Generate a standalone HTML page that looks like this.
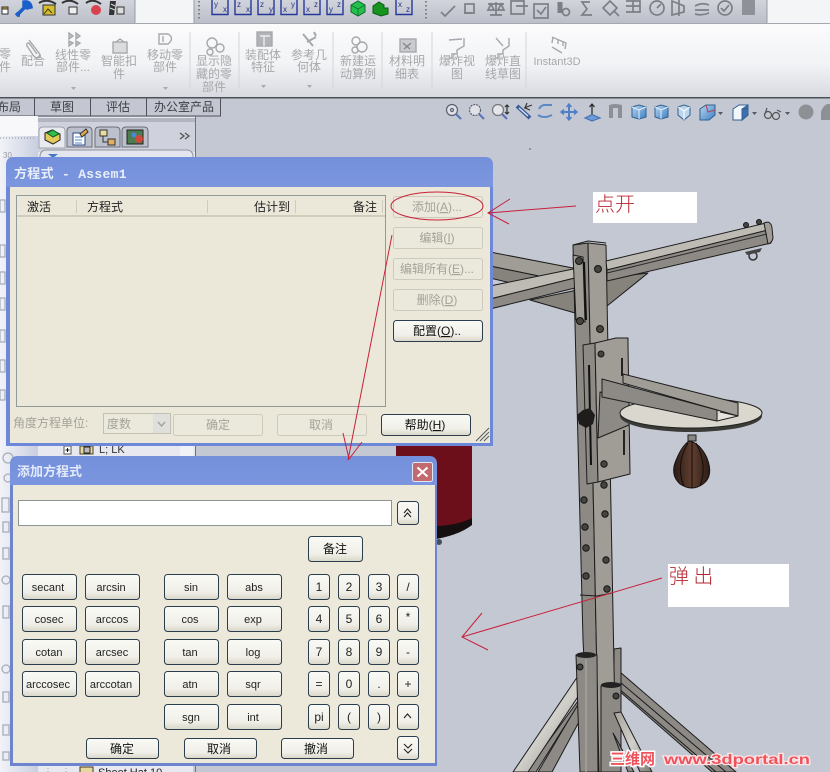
<!DOCTYPE html>
<html><head><meta charset="utf-8">
<style>
html,body{margin:0;padding:0;background:#c4c8d3}
svg{display:block;position:absolute;left:0;top:0;filter:blur(.35px)}
text{font-family:"Liberation Sans","Noto Sans CJK SC",sans-serif}
.r{font-size:12px;fill:#a6a8aa;text-anchor:middle}
.t{font-size:12px;fill:#3c3e44;text-anchor:middle}
.h{font-size:12px;fill:#222;}
.btn{fill:url(#bt);stroke:#2c3e4e;stroke-width:1}
.dis{fill:#ebe9dc;stroke:#cdcbbd;stroke-width:1}
.l{font-size:11px;fill:#222;text-anchor:middle}
.n{font-size:12px;fill:#222;text-anchor:middle}
.c{font-size:12px;fill:#111;text-anchor:middle}
.g{font-size:12px;fill:#a4a39a;text-anchor:middle}
.ax{fill:none;stroke:#24389a;stroke-width:1.4}
.axt{font-size:8px;fill:#28348a}
.gi{fill:none;stroke:#7d7f85;stroke-width:1.7}
.red{fill:none;stroke:#c8203a;stroke-width:1}
.m{stroke:#1c1c1c;stroke-width:1;stroke-linejoin:round}
.m1{fill:#8d8a85}.m2{fill:#a09d96}.m3{fill:#86837d}.m4{fill:#bdbbb4}
.bolt{fill:#45443f;stroke:#151515;stroke-width:1}
</style></head>
<body>
<svg width="830" height="772" viewBox="0 0 830 772" xmlns="http://www.w3.org/2000/svg">
<defs>
<linearGradient id="tb" x1="0" y1="0" x2="0" y2="1"><stop offset="0" stop-color="#d2d4dc"/><stop offset="1" stop-color="#bcbfc9"/></linearGradient>
<linearGradient id="rb" x1="0" y1="0" x2="0" y2="1"><stop offset="0" stop-color="#fbfbfc"/><stop offset=".55" stop-color="#f2f3f5"/><stop offset="1" stop-color="#d8dae1"/></linearGradient>
<linearGradient id="bt" x1="0" y1="0" x2="0" y2="1"><stop offset="0" stop-color="#fafaf6"/><stop offset=".7" stop-color="#f0efe8"/><stop offset="1" stop-color="#d9d6c8"/></linearGradient>
<linearGradient id="ti" x1="0" y1="0" x2="0" y2="1"><stop offset="0" stop-color="#7490dc"/><stop offset=".35" stop-color="#8ea6e4"/><stop offset="1" stop-color="#829be0"/></linearGradient>
<linearGradient id="cube" x1="0" y1="0" x2="1" y2="1"><stop offset="0" stop-color="#b9d6f0"/><stop offset="1" stop-color="#3d7fc4"/></linearGradient>
<linearGradient id="ball" x1="0" y1="0" x2="1" y2="0"><stop offset="0" stop-color="#2a1a14"/><stop offset=".5" stop-color="#5f3f30"/><stop offset="1" stop-color="#2c1c16"/></linearGradient>
<linearGradient id="leg" x1="0" y1="0" x2="1" y2="1"><stop offset="0" stop-color="#a5a29b"/><stop offset=".5" stop-color="#d2d0cb"/><stop offset="1" stop-color="#7c7a75"/></linearGradient>
<linearGradient id="strip" x1="0" y1="0" x2="1" y2="0"><stop offset="0" stop-color="#f2f3f8"/><stop offset="1" stop-color="#c9cfe0"/></linearGradient>
</defs>

<!-- background -->
<rect width="830" height="772" fill="#c4c8d3"/>

<!-- top toolbars -->
<rect x="0" y="0" width="830" height="24" fill="#f4f5f7"/>
<rect x="0" y="0" width="135" height="23" fill="url(#tb)"/>
<rect x="194" y="0" width="573" height="23" fill="url(#tb)"/>
<line x1="135" y1="0" x2="135" y2="23" stroke="#9a9ca4"/>
<line x1="194" y1="0" x2="194" y2="23" stroke="#9a9ca4"/>
<line x1="767" y1="0" x2="767" y2="23" stroke="#9a9ca4"/>
<line x1="0" y1="23.5" x2="830" y2="23.5" stroke="#a6a8b0"/>
<line x1="199" y1="1" x2="199" y2="19" stroke="#666" stroke-dasharray="1.5 2.5" stroke-width="1.5"/>
<line x1="426" y1="1" x2="426" y2="19" stroke="#666" stroke-dasharray="1.5 2.5" stroke-width="1.5"/>

<!-- left top icons -->
<rect x="2" y="7" width="6" height="6" fill="#e9a92e" stroke="#333"/>
<rect x="2" y="9" width="6" height="5" fill="#fff" stroke="#333"/>
<path d="M17 15 L27 5 M24 2 Q30 1 31 7 L27 8 L24 6 Z M17 15 l3 0 M16 13 l3 3" stroke="#1d5fc8" stroke-width="3.5" fill="#1d5fc8"/>
<path d="M39 3 Q47 -2 56 4" fill="none" stroke="#333" stroke-width="2"/><rect x="43" y="5" width="12" height="10" fill="#d6bc2e" stroke="#333"/><path d="M44 14 L48 9 L52 13" stroke="#3a3a10" fill="none"/>
<path d="M62 3 Q70 -2 78 4" fill="none" stroke="#333" stroke-width="2"/><rect x="69" y="7" width="8" height="7" fill="#eee" stroke="#333"/>
<path d="M86 3 Q93 -2 101 4" fill="none" stroke="#333" stroke-width="2"/><circle cx="96" cy="10" r="5" fill="#d8424c"/>
<path d="M110 1 L116 1 L114 15 L109 15 Z" fill="#333"/><path d="M111 4 L115 6 M110 8 L115 10" stroke="#ddd"/><rect x="117" y="7" width="7" height="7" fill="#ddd" stroke="#333"/>

<!-- axis toolbar icons -->
<g>
<path class="ax" d="M212 0 V14.500 H228 V0 M235 0 V14.500 H251 V0 M258 0 V14.500 H274 V0 M281 0 V14.500 H297 V0 M304 0 V14.500 H320 V0 M327 0 V14.500 H343 V0 M396 0 V14.500 H412 V0"/>
<text class="axt" x="214" y="7">y</text><text class="axt" x="223" y="12">x</text>
<text class="axt" x="237" y="7">z</text><text class="axt" x="246" y="12">x</text>
<text class="axt" x="260" y="7">z</text><text class="axt" x="269" y="12">y</text>
<text class="axt" x="283" y="12">x</text><text class="axt" x="291" y="7">y</text>
<text class="axt" x="306" y="12">x</text><text class="axt" x="314" y="7">z</text>
<text class="axt" x="329" y="12">y</text><text class="axt" x="337" y="7">z</text>
<text class="axt" x="398" y="7">x</text><text class="axt" x="406" y="12">z</text>
<path d="M351 5 L358 1 L365 5 V12 L358 16 L351 12 Z" fill="#24c04c" stroke="#14662c"/>
<path d="M351 5 L358 9 L365 5 M358 9 V16" stroke="#0f7a30" fill="none"/>
<path d="M373 6 L379 2 L384 5 V8 H388 V14 L381 16 L373 13 Z" fill="#15951f" stroke="#0d5a18"/>
</g>

<!-- grey tool icons -->
<g class="gi">
<path d="M441 12 L445 16 L455 6"/>
<rect x="465" y="4" width="9" height="9"/><path d="M464 13 H472"/>
<path d="M488 4 H504 M496 2 V15 M491 4 L488 10 H494 Z M501 4 L498 10 H504 Z M490 15 H502"/>
<path d="M511 1 H524 V14 H511 Z M516 6 H528"/>
<rect x="534" y="4" width="14" height="14"/><path d="M537 10 L541 14 L546 7"/>
<path d="M560 2 V13" stroke-width="5"/><circle cx="566" cy="12" r="3.500"/>
<path d="M590 2 H582 L587 9 L582 15 H592"/>
<path d="M603 8 L610 1 L617 8 L610 15 Z M614 11 L619 16"/>
<path d="M626 1 H640 V12 H626 M626 6 H640 M633 1 V12"/>
<circle cx="657" cy="8" r="7"/><path d="M657 8 L661 4"/>
<path d="M672 1 L684 6 V12 L672 15 Z M679 0 V16"/>
<path d="M695 6 Q702 2 709 5 M695 10 H709 M695 14 Q702 16 709 13"/>
<circle cx="725" cy="8" r="7"/><path d="M721 8 L724 11 L729 5"/>
<path d="M742 0 H755 V15 H742 Z" fill="#8f9198" stroke="none"/>
</g>

<!-- ribbon -->
<rect x="0" y="24" width="830" height="73" fill="url(#rb)"/>
<rect x="0" y="97" width="830" height="1.500" fill="#4d5057"/>
<g stroke="#d3d5da"><path d="M190 32V88M239 32V88M333 32V88M382 32V88M432 32V88M526 32V88"/></g>

<g class="r">
<text x="5" y="58">零</text><text x="5" y="71">件</text>
<text x="33" y="65">配合</text>
<text x="73" y="59">线性零</text><text x="73" y="71">部件...</text>
<text x="119" y="65">智能扣</text><text x="119" y="78">件</text>
<text x="165" y="59">移动零</text><text x="165" y="71">部件</text>
<text x="214" y="65">显示隐</text><text x="214" y="78">藏的零</text><text x="214" y="91">部件</text>
<text x="263" y="59">装配体</text><text x="263" y="71">特征</text>
<text x="309" y="59">参考几</text><text x="309" y="71">何体</text>
<text x="358" y="65">新建运</text><text x="358" y="78">动算例</text>
<text x="407" y="65">材料明</text><text x="407" y="78">细表</text>
<text x="457" y="65">爆炸视</text><text x="457" y="78">图</text>
<text x="503" y="65">爆炸直</text><text x="503" y="78">线草图</text>
<text x="557" y="65" style="font-size:11px">Instant3D</text>
</g>
<!-- ribbon icons -->
<g fill="none" stroke="#a6a8ac" stroke-width="1.400">
<path d="M29 40 L39 53 Q42 57 38 58 Q35 58 33 55 L27 46 Q26 43 29 43 L37 54"/>
<path d="M69 33 V39 L73 36 Z M76 33 V39 L80 36 Z M69 41 V46 L73 43 Z M76 41 V46 L80 43 Z" fill="#c4c6c9"/>
<rect x="113" y="42" width="14" height="11" fill="#dcdcdc"/><path d="M116 42 L120 39 L124 42"/>
<path d="M159 34 H168 Q175 38 168 44 H159 Z M163 36 V42"/>
<circle cx="212" cy="43" r="5"/><circle cx="220" cy="48" r="4"/><circle cx="210" cy="52" r="3"/>
<rect x="257" y="32" width="15" height="14" fill="#b1b3b6"/><path d="M260 36 H270 M264 36 V46" stroke="#eee"/>
<path d="M303 34 L313 46 M307 42 L316 37 M314 32 L316 36" stroke-width="2"/>
<circle cx="356" cy="41" r="4"/><circle cx="362" cy="47" r="5"/><circle cx="355" cy="50" r="3"/>
<rect x="400" y="39" width="16" height="13" fill="#c9cbce"/><path d="M403 43 L410 49 M411 43 L404 49" stroke="#888"/>
<path d="M449 40 L462 39 M464 38 V46 L457 50 V54 H452 V58 H449" /><path d="M496 38 L503 46 M509 38 V46 L503 50 V54 H498 V58 H495"/>
<path d="M552 37 L566 43 L565 49 M553 37 L552 43 M558 40 V44 M563 41 V46 M552 47 L562 53" />
</g>
<g fill="#a8aaae"><path d="M71 87h5l-2.500 3zM163 87h5l-2.500 3zM261 85h5l-2.500 3zM307 85h5l-2.500 3z"/></g>

<!-- tabs -->
<rect x="-2" y="98" width="36.500" height="18" fill="#c4c7d1" stroke="#4f525a"/>
<rect x="34.500" y="98" width="56" height="18" fill="#c4c7d1" stroke="#4f525a"/>
<rect x="90.500" y="98" width="56" height="18" fill="#c4c7d1" stroke="#4f525a"/>
<rect x="146.500" y="98" width="74" height="18" fill="#c4c7d1" stroke="#4f525a"/>
<g class="t"><text x="9" y="111">布局</text><text x="62" y="111">草图</text><text x="118" y="111">评估</text><text x="184" y="111">办公室产品</text></g>

<!-- left panel -->
<rect x="0" y="117" width="195" height="350" fill="#e8e9ef"/>
<rect x="0" y="117" width="38" height="655" fill="url(#strip)"/>
<rect x="0" y="116" width="38" height="20" fill="#f8f8fa"/>
<rect x="38" y="118" width="157" height="34" fill="#cfd2dc"/>
<line x1="38" y1="119" x2="195" y2="119" stroke="#9497a2"/>
<line x1="38" y1="121" x2="195" y2="121" stroke="#9497a2"/>
<line x1="195.500" y1="116" x2="195.500" y2="772" stroke="#6f7178"/>
<line x1="0" y1="138" x2="36" y2="138" stroke="#8c8e96" stroke-dasharray="1 2"/>
<text x="3" y="158" style="font-size:8px;fill:#9a9ca4">30</text>
<!-- panel tabs -->
<path d="M39 148 V131 Q39 127 43 127 H61 Q65 127 65 131 V148 Z" fill="#e8eaf0" stroke="#9ea1ac"/>
<path d="M67 147 V131 Q67 127 71 127 H88 Q92 127 92 131 V147 Z" fill="#bcc0cc" stroke="#6c6f78"/>
<path d="M95 147 V131 Q95 127 99 127 H116 Q120 127 120 131 V147 Z" fill="#bcc0cc" stroke="#6c6f78"/>
<path d="M122 147 V131 Q122 127 126 127 H144 Q148 127 148 131 V147 Z" fill="#bcc0cc" stroke="#6c6f78"/>
<path d="M45 133 L52 130 L60 134 V140 L53 144 L45 140 Z" fill="#e3c95a" stroke="#222"/><path d="M47 133 L53 130 L59 134 L53 137 Z" fill="#30c04a" stroke="#1c5a28"/>
<rect x="73" y="133" width="12" height="12" fill="#fff" stroke="#2a4a8a"/><path d="M75 137h7M75 140h7M75 143h7" stroke="#4f8ac8"/><path d="M80 134 L86 129 L88 132 L82 137 Z" fill="#e2a84a" stroke="#333"/>
<rect x="100" y="130" width="7" height="6" fill="#eadc9a" stroke="#333"/><rect x="108" y="139" width="7" height="6" fill="#e4b060" stroke="#333"/><path d="M103 136 V142 H108" stroke="#333" fill="none"/>
<rect x="127" y="130" width="16" height="14" fill="#4c7c50" stroke="#222"/><circle cx="139" cy="139" r="4" fill="#d04a3c"/><circle cx="134" cy="135" r="2.500" fill="#4a88d8"/>
<path d="M180 133 l4 3 l-4 3 M185 133 l4 3 l-4 3" fill="none" stroke="#555" stroke-width="1.3"/>
<rect x="40" y="150" width="153" height="20" rx="6" fill="#e4e6ee" stroke="#8e919c"/>
<path d="M48 154 H58 L53 158 Z" fill="#4a78c0"/>

<!-- tree fragments -->
<rect x="38" y="446" width="155" height="12" fill="#e7e8f0"/>
<rect x="38" y="764" width="155" height="8" fill="#e7e8f0"/>
<rect x="180" y="446" width="13" height="12" fill="#f1f2f6"/>
<rect x="64" y="446" width="7" height="8" fill="#fff" stroke="#555"/><path d="M65.500 450H69.500M67.500 448V452" stroke="#111"/>
<rect x="80" y="446" width="13" height="8" fill="#eadb9c" stroke="#443"/><rect x="84" y="447" width="6" height="6" fill="#bbb" stroke="#222"/>
<text x="99" y="453" style="font-size:11px;fill:#333">L; LK</text>
<path d="M48 762V772M66 762V772" stroke="#aaa" stroke-dasharray="1 2"/>
<rect x="80" y="767" width="13" height="8" fill="#e6d9a0" stroke="#432"/>
<text x="98" y="776" style="font-size:11px;fill:#222">Sheet Hat 10</text>
<!-- left strip icons -->
<g fill="none" stroke="#a9adb8" stroke-width="1.300">
<rect x="0" y="200" width="5" height="12"/><rect x="0" y="245" width="5" height="12"/><rect x="0" y="272" width="5" height="12"/><rect x="0" y="298" width="5" height="12"/><rect x="0" y="330" width="5" height="12"/><rect x="0" y="360" width="5" height="12"/><rect x="0" y="390" width="5" height="10"/>
<circle cx="8" cy="458" r="5"/><circle cx="8" cy="478" r="4"/>
<rect x="2" y="498" width="7" height="14"/><rect x="3" y="522" width="6" height="10"/><rect x="3" y="548" width="6" height="11"/><circle cx="6" cy="580" r="4"/><rect x="3" y="606" width="6" height="12"/><circle cx="6" cy="669" r="4"/><rect x="3" y="692" width="6" height="10"/><rect x="3" y="725" width="6" height="10"/><rect x="3" y="752" width="6" height="8"/>
</g>

<!-- view toolbar -->
<g fill="none" stroke="#5b6070" stroke-width="1.200">
<circle cx="452" cy="110" r="5.500" fill="#dfe1e6"/><circle cx="452" cy="110" r="1.500"/><path d="M456 114 L461 119" stroke="#5a72b8" stroke-width="2"/>
<circle cx="475" cy="110" r="5.500" fill="#dfe1e6" stroke-dasharray="2 1"/><path d="M479 114 L484 119" stroke="#5a72b8" stroke-width="2"/>
<circle cx="498" cy="110" r="5.500" fill="#e4e6ea" stroke="#777"/><path d="M502 114 L507 119" stroke="#5a72b8" stroke-width="2"/><path d="M507 105V114M505 107l2-2 2 2M505 112l2 2 2-2" stroke="#333"/>
<path d="M517 106 L530 118" stroke="#3c5a98" stroke-width="4"/><path d="M519 108 L528 116" stroke="#cfe0f0" stroke-width="1.500"/><path d="M524 108 L532 105 M527 103 L525 108 L530 110" stroke="#333"/>
<path d="M539 109 Q541 104 548 105 L552 105 M538 115 Q544 119 552 115" stroke="#5c88c8" stroke-width="2"/>
<path d="M569 105 V119 M562 112 H576" stroke="#4f80c8" stroke-width="2"/><path d="M566.500 107 L569 104 L571.500 107 M566.500 117 L569 120 L571.500 117 M564 109.500 L561 112 L564 114.500 M574 109.500 L577 112 L574 114.500" stroke="#4f80c8" stroke-width="1.500"/>
<path d="M592 104 V117 M589.500 107 L592 104 L594.500 107" stroke="#222"/><path d="M585 118 L592 114.500 L600 118 L592 121 Z" fill="#6b9ad8" stroke="#4a70b0"/>
</g>
<path d="M609 105 Q615 103 622 105 V118 H618 V108 H613 V118 H609 Z" fill="#8d8f96"/>
<g stroke="#31608f" stroke-width="1">
<path d="M632 107 L639 105 L646 107 V117 L639 119 L632 117 Z" fill="url(#cube)"/><path d="M632 107 L639 110 L646 107 M639 110 V119" fill="none" stroke="#e4f0fb"/>
<path d="M655 107 L661 105 L668 107 V117 L661 119 L655 117 Z" fill="url(#cube)"/><path d="M655 107 L661 110 L668 107 M661 110 V119" fill="none" stroke="#e4f0fb"/>
<path d="M678 107 L684 105 L690 107 V115 L684 120 L678 115 Z" fill="#bcd6ee"/><path d="M678 107 L684 111 L690 107 M684 111 V120" fill="none" stroke="#fff"/>
<path d="M700 109 L706 105 H715 V115 L709 120 H700 Z" fill="url(#cube)"/><path d="M706 105 L708 112 L715 110" fill="none" stroke="#b04050"/>
<path d="M733 109 L739 105 H748 V115 L742 120 H733 Z" fill="#f2f7fc"/><path d="M742 109 H748 M742 109 L748 105 V115 L742 120 Z" fill="#3f6fb0"/>
</g>
<g fill="#555a66"><path d="M718 112h5l-2.500 3zM752 112h5l-2.500 3zM785 112h5l-2.500 3z"/></g>
<g fill="none" stroke="#555" stroke-width="1.200"><circle cx="768" cy="115" r="3.500"/><circle cx="776" cy="116" r="3.500"/><path d="M767 108 L765 114 M777 110 L781 112"/></g>
<circle cx="806" cy="112" r="7.500" fill="#8e9095"/>
<path d="M821 120 V112 Q824 103 830 104 V120 Z" fill="#8e9095"/>
<circle cx="530" cy="149" r=".8" fill="#555"/>

<!-- 3D MODEL -->
<g>
<!-- red bag -->
<path d="M396 440 H472 V519 Q456 535 430 540 H396 Z" fill="#6d0e1b"/>
<path d="M396 526 H438 Q458 525 472 518 V525 Q458 536 430 540 H396 Z" fill="#15100f"/>
<circle cx="439" cy="542" r="3" fill="#45505c"/>

<!-- rear arm -->
<path class="m m2" d="M490 252 L573 268 V283 L490 266 Z"/>
<path class="m m3" d="M490 266 L573 283 L540 290 L490 278 Z"/>
<!-- gussets -->
<path class="m m3" d="M530 300 L582 289 V315 Z"/>
<path class="m m3" d="M606 278 L648 273 L607 306 Z"/>

<!-- base rear leg right -->
<path class="m m1" d="M620 672 L736 772 H712 L618 690 Z"/>
<path d="M620 682 L726 772 M618 688 L716 772" stroke="#1c1c1c" fill="none"/>
<!-- left legs -->
<path class="m m1" d="M578 704 L580 720 L552 772 H538 Z"/>
<path class="m m1" d="M586 690 L576 708 L536 772 H526 Z"/>
<path class="m" fill="url(#leg)" d="M582 670 L589 680 L528 772 H513 Z"/>

<!-- rear sleeve -->
<path class="m m1" d="M614 649 L621 648 V714 L614 716 Z"/>
<!-- post -->
<path class="m m1" d="M573 245 L588 243 L599 772 H590 L583 640 Z"/>
<path class="m m2" d="M588 243 L606 245 L616 772 H599 Z"/>
<path class="m" fill="none" d="M573 245 L588 241 L606 243"/>
<path d="M580 595 L597 596 L612 593" stroke="#1c1c1c" fill="none"/>
<!-- sleeve left -->
<path class="m m1" d="M576 655 L597 655 L598 772 H580 Z"/>
<path d="M586 659 L586 772" stroke="#b2b0aa" stroke-width="1"/>
<ellipse cx="586" cy="655" rx="10" ry="3" fill="#222"/>
<circle cx="580" cy="667" r="3" class="bolt"/>
<!-- sleeve right -->
<path class="m m1" d="M601 686 L621 684 V772 H601 Z"/>
<ellipse cx="611" cy="685" rx="10" ry="3" fill="#222"/>
<circle cx="616" cy="696" r="3" class="bolt"/>
<!-- front thin legs -->
<path class="m" fill="url(#leg)" d="M614 713 L621 712 L652 772 H640 Z"/>
<path class="m m1" d="M613 733 L617 740 L634 772 H628 Z"/>

<!-- main arm -->
<path class="m m4" d="M490 286 L583 267 V276 L490 299 Z"/>
<path class="m m1" d="M490 299 L583 276 V286 L490 309 Z"/>
<path class="m m4" d="M606 261 L766 223 L768 230 L607 270 Z"/>
<path class="m m1" d="M607 270 L768 230 L771 243 L607 281 Z"/>
<path class="m m2" d="M764 223 Q771 220 772 228 L773 238 Q772 243 768 244 Z"/>
<path d="M607 273 L767 234" stroke="#2a2a2a" fill="none"/>
<!-- collar over arm -->
<path class="m m2" d="M573 255 L583 257 L585 322 L576 320 Z"/>
<path d="M584 262 L586 320" stroke="#111" stroke-width="2"/>
<!-- bolts -->
<circle class="bolt" cx="579" cy="261" r="3.500"/>
<circle class="bolt" cx="598" cy="269" r="3.500"/>
<circle class="bolt" cx="580" cy="321" r="3.500"/>
<circle class="bolt" cx="600" cy="329" r="3.500"/>
<circle class="bolt" cx="746" cy="225" r="2.500"/>
<circle class="bolt" cx="759" cy="222" r="2.500"/>
<circle cx="753" cy="256" r="4" fill="none" stroke="#333" stroke-width="1.500"/>
<path d="M745 252 L762 248 L760 252 L747 255 Z" fill="#444"/>
<!-- post holes -->
<circle class="bolt" cx="584" cy="500" r="3.200"/><circle class="bolt" cx="585" cy="527" r="3.200"/><circle class="bolt" cx="586" cy="548" r="3.200"/><circle class="bolt" cx="586" cy="576" r="3.200"/>
<circle class="bolt" cx="605" cy="514" r="3.200"/><circle class="bolt" cx="606" cy="560" r="3.200"/><circle class="bolt" cx="607" cy="589" r="3.200"/>

<!-- bracket -->
<path class="m m1" d="M583 345 L595 343 L598 482 L587 484 Z"/>
<path class="m m2" d="M595 343 L616 338 L628 338 Q628 340 628 345 L630 474 L598 482 Z"/>
<path d="M589 365 L591 465" stroke="#111" stroke-width="2"/>
<path d="M622 358 V376 M624 430 V455" stroke="#222" stroke-width="2"/>
<path class="m m1" d="M600 392 L629 400 L629 425 L598 438 Z"/>
<circle class="bolt" cx="601" cy="354" r="3"/>
<circle class="bolt" cx="604" cy="464" r="3.200"/>
<circle class="bolt" cx="604" cy="485" r="3.200"/>
<!-- disk -->
<ellipse cx="691" cy="416" rx="71" ry="16" fill="#3a3a36"/>
<ellipse cx="691" cy="413" rx="71" ry="15" fill="#d9d7ce" stroke="#222"/>
<!-- rear angle arm -->
<path class="m m2" d="M623 374 L738 403 L738 416 L623 383 Z"/>
<path class="m m1" d="M602 379 L717 410 L717 421 L602 397 Z"/>
<path d="M717 421 L738 416 L720 412" fill="#e6e4dc" stroke="#222"/>
<!-- knob -->
<path d="M583 410 L590 408 L595 415 L593 424 L586 428 L579 424 L577 415 Z" fill="#1e1d1b"/>
<!-- ball -->
<path d="M688 435 H696 V441 H688 Z" fill="#878782" stroke="#222"/>
<path d="M689 441 Q700 443 707 458 Q714 476 703 484 Q692 492 680 484 Q669 474 677 458 Q682 446 689 441 Z" fill="url(#ball)" stroke="#151515"/>
<path d="M692 442 V488 M688 443 Q675 465 684 486 M696 443 Q708 465 700 486" stroke="#140b08" fill="none"/>
</g>

<!-- DIALOG 1 -->
<path d="M6 446 V165 Q6 157 14 157 H485 Q493 157 493 165 V446 Z" fill="url(#ti)"/>
<rect x="6" y="187" width="487" height="259" fill="#6d88d9"/>
<rect x="10" y="187" width="480" height="256" fill="#ebe8d9"/>
<text x="14" y="178" style="font-size:13px;font-weight:bold;fill:#e8eefa;letter-spacing:.3px;font-family:'Liberation Mono','Noto Sans CJK SC',monospace">方程式 - Assem1</text>
<rect x="16.500" y="195.500" width="369" height="211" fill="#ebe8d9" stroke="#8f9a9a"/>
<line x1="17" y1="216" x2="385" y2="216" stroke="#c6c3b2" stroke-width="1.500"/>
<path d="M76.500 200V213M207.500 200V213M295.500 200V213M382.500 200V213" stroke="#cfccbb"/>
<g class="h"><text x="27" y="211">激活</text><text x="87" y="211">方程式</text><text x="254" y="211">估计到</text><text x="353" y="211">备注</text></g>

<g>
<rect class="dis" x="393.500" y="196.500" width="89" height="21" rx="2"/>
<rect class="dis" x="393.500" y="227.500" width="89" height="21" rx="2"/>
<rect class="dis" x="393.500" y="258.500" width="89" height="21" rx="2"/>
<rect class="dis" x="393.500" y="289.500" width="89" height="21" rx="2"/>
<rect class="btn" x="393.500" y="320.500" width="89" height="21" rx="3"/>
<rect class="dis" x="173.500" y="414.500" width="89" height="21" rx="2"/>
<rect class="dis" x="277.500" y="414.500" width="89" height="21" rx="2"/>
<rect class="btn" x="381.500" y="414.500" width="89" height="21" rx="3"/>
<text class="g" x="437" y="211">添加(<tspan text-decoration="underline">A</tspan>)...</text>
<text class="g" x="437" y="242">编辑(<tspan text-decoration="underline">I</tspan>)</text>
<text class="g" x="437" y="273">编辑所有(<tspan text-decoration="underline">E</tspan>)...</text>
<text class="g" x="437" y="304">删除(<tspan text-decoration="underline">D</tspan>)</text>
<text class="c" x="437" y="335">配置(<tspan text-decoration="underline">O</tspan>)..</text>
<text class="g" x="218" y="429">确定</text>
<text class="g" x="321" y="429">取消</text>
<text class="c" x="425" y="429">帮助(<tspan text-decoration="underline">H</tspan>)</text>
<text x="13" y="427" style="font-size:12px;fill:#a4a39a">角度方程单位:</text>
<rect x="103.500" y="413.500" width="67" height="20" fill="#ebe9dc" stroke="#c3c1b2"/>
<rect x="153" y="414" width="17" height="19" fill="#dfe0dc"/>
<path d="M158 422 L161.500 426 L165 422" fill="none" stroke="#a5a59f" stroke-width="1.500"/>
<text x="107" y="428" style="font-size:12px;fill:#a4a39a">度数</text>
</g>
<path d="M476 441 L489 428 M480 441 L489 432 M484 441 L489 436" stroke="#545a5a"/>

<!-- DIALOG 2 -->
<path d="M10 766 V464 Q10 456 18 456 H429 Q437 456 437 464 V766 Z" fill="url(#ti)"/>
<rect x="10" y="485" width="427" height="281" fill="#6d84cf"/>
<rect x="13" y="485" width="422" height="278" fill="#ece9da"/>
<text x="17" y="476" style="font-size:13px;font-weight:bold;fill:#e3eafa;font-family:'Noto Sans CJK SC',sans-serif">添加方程式</text>
<rect x="412.500" y="462.500" width="20" height="19" rx="2" fill="#c16a70" stroke="#e2e6f5"/>
<path d="M417.500 467.500 L427.500 476.500 M427.500 467.500 L417.500 476.500" stroke="#fff" stroke-width="2"/>
<rect x="18.500" y="500.500" width="373" height="25" fill="#fff" stroke="#8d9696"/>

<g>
<rect class="btn" x="397.500" y="501.500" width="21" height="23" rx="3"/>
<path d="M404 513 L407.500 509 L411 513 M404 517 L407.500 513 L411 517" fill="none" stroke="#222" stroke-width="1.100"/>
<rect class="btn" x="308.500" y="536.500" width="54" height="25" rx="3"/>
<text class="c" x="335" y="553">备注</text>

<!-- col 1 & 2 -->
<rect class="btn" x="22.500" y="574.500" width="54" height="25" rx="3"/><text class="l" x="48" y="591">secant</text>
<rect class="btn" x="85.500" y="574.500" width="54" height="25" rx="3"/><text class="l" x="111" y="591">arcsin</text>
<rect class="btn" x="22.500" y="606.500" width="54" height="25" rx="3"/><text class="l" x="49" y="623">cosec</text>
<rect class="btn" x="85.500" y="606.500" width="54" height="25" rx="3"/><text class="l" x="112" y="623">arccos</text>
<rect class="btn" x="22.500" y="639.500" width="54" height="25" rx="3"/><text class="l" x="49" y="656">cotan</text>
<rect class="btn" x="85.500" y="639.500" width="54" height="25" rx="3"/><text class="l" x="112" y="656">arcsec</text>
<rect class="btn" x="22.500" y="671.500" width="54" height="25" rx="3"/><text class="l" x="48" y="688">arccosec</text>
<rect class="btn" x="85.500" y="671.500" width="54" height="25" rx="3"/><text class="l" x="111" y="688">arccotan</text>

<!-- col 3 & 4 -->
<rect class="btn" x="164.500" y="574.500" width="54" height="25" rx="3"/><text class="l" x="191" y="591">sin</text>
<rect class="btn" x="227.500" y="574.500" width="54" height="25" rx="3"/><text class="l" x="254" y="591">abs</text>
<rect class="btn" x="164.500" y="606.500" width="54" height="25" rx="3"/><text class="l" x="190" y="623">cos</text>
<rect class="btn" x="227.500" y="606.500" width="54" height="25" rx="3"/><text class="l" x="253" y="623">exp</text>
<rect class="btn" x="164.500" y="639.500" width="54" height="25" rx="3"/><text class="l" x="190" y="656">tan</text>
<rect class="btn" x="227.500" y="639.500" width="54" height="25" rx="3"/><text class="l" x="253" y="656">log</text>
<rect class="btn" x="164.500" y="671.500" width="54" height="25" rx="3"/><text class="l" x="190" y="688">atn</text>
<rect class="btn" x="227.500" y="671.500" width="54" height="25" rx="3"/><text class="l" x="253" y="688">sqr</text>
<rect class="btn" x="164.500" y="704.500" width="54" height="25" rx="3"/><text class="l" x="191" y="721">sgn</text>
<rect class="btn" x="227.500" y="704.500" width="54" height="25" rx="3"/><text class="l" x="253" y="721">int</text>

<!-- number pad -->
<rect class="btn" x="308.500" y="574.500" width="21" height="25" rx="3"/><text class="n" x="319" y="591">1</text>
<rect class="btn" x="338.500" y="574.500" width="21" height="25" rx="3"/><text class="n" x="349" y="591">2</text>
<rect class="btn" x="368.500" y="574.500" width="21" height="25" rx="3"/><text class="n" x="379" y="591">3</text>
<rect class="btn" x="397.500" y="574.500" width="21" height="25" rx="3"/><text class="n" x="408" y="591">/</text>
<rect class="btn" x="308.500" y="606.500" width="21" height="25" rx="3"/><text class="n" x="319" y="623">4</text>
<rect class="btn" x="338.500" y="606.500" width="21" height="25" rx="3"/><text class="n" x="349" y="623">5</text>
<rect class="btn" x="368.500" y="606.500" width="21" height="25" rx="3"/><text class="n" x="379" y="623">6</text>
<rect class="btn" x="397.500" y="606.500" width="21" height="25" rx="3"/><text class="n" x="408" y="621">*</text>
<rect class="btn" x="308.500" y="639.500" width="21" height="25" rx="3"/><text class="n" x="319" y="656">7</text>
<rect class="btn" x="338.500" y="639.500" width="21" height="25" rx="3"/><text class="n" x="349" y="656">8</text>
<rect class="btn" x="368.500" y="639.500" width="21" height="25" rx="3"/><text class="n" x="379" y="656">9</text>
<rect class="btn" x="397.500" y="639.500" width="21" height="25" rx="3"/><text class="n" x="408" y="656">-</text>
<rect class="btn" x="308.500" y="671.500" width="21" height="25" rx="3"/><text class="n" x="319" y="688">=</text>
<rect class="btn" x="338.500" y="671.500" width="21" height="25" rx="3"/><text class="n" x="349" y="688">0</text>
<rect class="btn" x="368.500" y="671.500" width="21" height="25" rx="3"/><text class="n" x="379" y="688">.</text>
<rect class="btn" x="397.500" y="671.500" width="21" height="25" rx="3"/><text class="n" x="408" y="688">+</text>
<rect class="btn" x="308.500" y="704.500" width="21" height="25" rx="3"/><text class="n" x="319" y="721">pi</text>
<rect class="btn" x="338.500" y="704.500" width="21" height="25" rx="3"/><text class="n" x="349" y="721">(</text>
<rect class="btn" x="368.500" y="704.500" width="21" height="25" rx="3"/><text class="n" x="379" y="721">)</text>
<rect class="btn" x="397.500" y="704.500" width="21" height="25" rx="3"/>
<path d="M404 718 L407.500 714 L411 718" fill="none" stroke="#222" stroke-width="1.100"/>

<!-- bottom -->
<rect class="btn" x="86.500" y="738.500" width="72" height="20" rx="3"/><text class="c" x="122" y="753">确定</text>
<rect class="btn" x="184.500" y="738.500" width="72" height="20" rx="3"/><text class="c" x="219" y="753">取消</text>
<rect class="btn" x="281.500" y="738.500" width="72" height="20" rx="3"/><text class="c" x="316" y="753">撤消</text>
<rect class="btn" x="397.500" y="736.500" width="21" height="23" rx="3"/>
<path d="M404 744 L408 748 L412 744 M404 749 L408 753 L412 749" fill="none" stroke="#222" stroke-width="1.100"/>
</g>

<!-- annotations -->
<rect x="593" y="192" width="104" height="31" fill="#fff"/>
<text x="595" y="211" style="font-size:20px;fill:#b42632;font-family:'Noto Sans CJK SC',sans-serif;font-weight:300">点开</text>
<rect x="668" y="564" width="121" height="43" fill="#fff"/>
<text x="669" y="583" style="font-size:20px;fill:#b42632;font-family:'Noto Sans CJK SC',sans-serif;font-weight:300">弹 出</text>

<ellipse class="red" cx="437" cy="206" rx="46" ry="14"/>
<path class="red" d="M576 206 L488 213 M510 199 L488 213 L509 224"/>
<path class="red" d="M392 235 L348 460 M343 433 L349 459 L362 442"/>
<path class="red" d="M662 578 L462 637 M482 613 L462 637 L488 650"/>

<!-- watermark -->
<text x="610" y="764" style="font-size:15px;font-weight:bold;fill:#f0525c;stroke:#fff;stroke-width:3px;paint-order:stroke;font-family:'Noto Sans CJK SC',sans-serif">三维网</text>
<text x="664" y="764" textLength="146" lengthAdjust="spacingAndGlyphs" style="font-size:14px;font-weight:bold;fill:#f0525c;stroke:#fde4e6;stroke-width:2.400px;paint-order:stroke;font-family:'Liberation Sans',sans-serif">www.3dportal.cn</text>
</svg>
</body></html>
